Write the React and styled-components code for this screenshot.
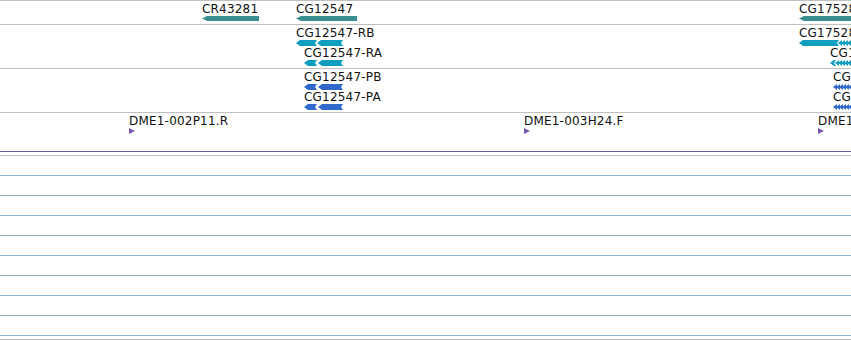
import React from "react";
import styled, { createGlobalStyle } from "styled-components";

const GlobalStyle = createGlobalStyle`
  html, body {
    margin: 0;
    padding: 0;
    background: #fff;
    overflow: hidden;
  }
`;

const Browser = styled.div`
  width: 851px;
  height: 340px;
  overflow: hidden;
  border-top: 1px solid #c0c0c0;
  box-sizing: border-box;
  font-family: "DejaVu Sans", Verdana, sans-serif;
  display: flex;
  flex-direction: column;
`;

const Track = styled.div`
  flex: none;
  height: ${(p) => p.$h}px;
  box-sizing: border-box;
  padding-top: 2px;
  display: flex;
  flex-direction: column;
  gap: 0;
  border-bottom: 1px solid ${(p) => p.$line || "#c0c0c0"};
`;

// one layout row of a track; features sit on it at their genome coordinate
const Row = styled.div`
  position: relative;
  flex: none;
  height: 20px;
`;

const Feature = styled.div`
  position: absolute;
  left: ${(p) => p.$x}px;
  top: 0;
  display: flex;
  flex-direction: column;
  align-items: flex-start;
`;

const Label = styled.div`
  font-size: 12px;
  line-height: 12px;
  height: 12px;
  color: #111;
  white-space: nowrap;
  letter-spacing: 0.2px;
`;

const Glyph = styled.svg`
  display: block;
  margin-top: ${(p) => p.$gap ?? 1}px;
  overflow: visible;
`;

const Spacer = styled.div`
  flex: none;
  height: 3px;
  border-bottom: 1px solid #c0c0c0;
`;

const Lane = styled.div`
  flex: none;
  height: 19px;
  border-bottom: 1px solid #8db7d8;
`;

const COLORS = {
  gene: "#3b8e8f",
  rna: "#0f9dc0",
  cds: "#3168cc",
  clone: "#7656b0",
};

// exon shape: left pointing tip, small notch on the right
const exonPoints = (a, b, h) =>
  `${a},${h / 2} ${a + 4},0 ${b},0 ${b - 2},${h / 2} ${b},${h} ${a + 4},${h}`;

const chevrons = (a, b, h) => {
  const out = [];
  for (let x = a; x < b; x += 3) {
    out.push(`${x},${h / 2} ${x + 4},0 ${x + 4},${h}`);
  }
  return out;
};

const Gene = ({ x, label, w, color }) => (
  <Feature $x={x}>
    <Label>{label}</Label>
    <Glyph width={w} height={5}>
      <polygon points={`0,2.5 5,0 ${w},0 ${w},5 5,5`} fill={color} />
    </Glyph>
  </Feature>
);

const Transcript = ({ x, label, exons = [], chev, color }) => (
  <Feature $x={x}>
    <Label>{label}</Label>
    <Glyph width={60} height={6}>
      {exons.map(([a, b]) => (
        <polygon key={a} points={exonPoints(a, b, 6)} fill={color} />
      ))}
      {chev &&
        chevrons(chev[0], chev[1], 6).map((p) => (
          <polygon key={p} points={p} fill={color} />
        ))}
    </Glyph>
  </Feature>
);

const Clone = ({ x, label }) => (
  <Feature $x={x}>
    <Label>{label}</Label>
    <Glyph width={6} height={6} $gap={1}>
      <polygon points="0,0 6,3 0,6" fill={COLORS.clone} />
    </Glyph>
  </Feature>
);

const lanes = Array.from({ length: 9 }, (_, i) => i);

export default function App() {
  return (
    <>
      <GlobalStyle />
      <Browser>
        <Track $h={24}>
          <Row>
            <Gene x={202} label="CR43281" w={57} color={COLORS.gene} />
            <Gene x={296} label="CG12547" w={61} color={COLORS.gene} />
            <Gene x={799} label="CG17528" w={60} color={COLORS.gene} />
          </Row>
        </Track>

        <Track $h={44}>
          <Row>
            <Transcript x={296} label="CG12547-RB" exons={[[0, 21], [21, 47]]} color={COLORS.rna} />
            <Transcript x={799} label="CG17528-RB" exons={[[0, 40]]} chev={[39, 60]} color={COLORS.rna} />
          </Row>
          <Row>
            <Transcript x={304} label="CG12547-RA" exons={[[0, 13], [14, 39]]} color={COLORS.rna} />
            <Transcript x={830} label="CG17528-RA" exons={[[0, 6]]} chev={[5, 30]} color={COLORS.rna} />
          </Row>
        </Track>

        <Track $h={44}>
          <Row>
            <Transcript x={304} label="CG12547-PB" exons={[[0, 13], [14, 39]]} color={COLORS.cds} />
            <Transcript x={833} label="CG17528-PB" chev={[0, 24]} color={COLORS.cds} />
          </Row>
          <Row>
            <Transcript x={304} label="CG12547-PA" exons={[[0, 13], [14, 39]]} color={COLORS.cds} />
            <Transcript x={833} label="CG17528-PA" chev={[0, 24]} color={COLORS.cds} />
          </Row>
        </Track>

        <Track $h={39} $line="#6b5a9e">
          <Row>
            <Clone x={129} label="DME1-002P11.R" />
            <Clone x={524} label="DME1-003H24.F" />
            <Clone x={818} label="DME1-004C07.R" />
          </Row>
        </Track>

        <Spacer />
        {lanes.map((i) => (
          <Lane key={i} />
        ))}
        <Spacer />
      </Browser>
    </>
  );
}
